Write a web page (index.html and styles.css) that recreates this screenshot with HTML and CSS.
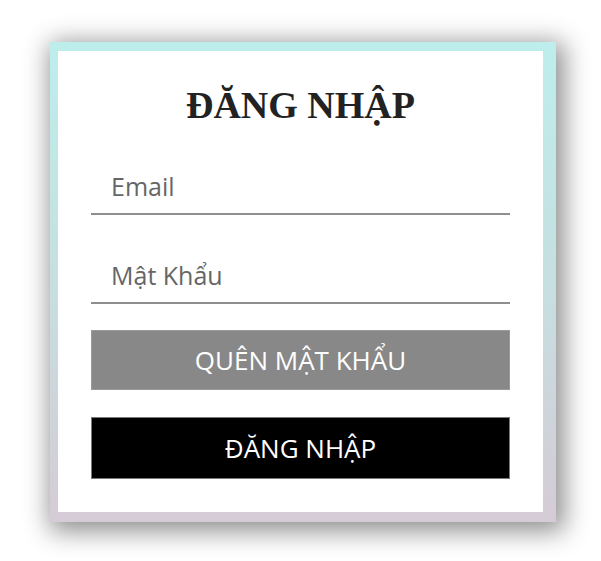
FILE: index.html
```html
<!DOCTYPE html>
<html lang="vi">
<head>
<meta charset="utf-8">
<title>Đăng nhập</title>
<link rel="stylesheet" href="styles.css">
</head>
<body>
  <div class="frame">
    <form class="card">
      <h1 class="title">ĐĂNG NHẬP</h1>
      <input class="field" type="email" placeholder="Email">
      <input class="field field-gap" type="password" placeholder="Mật Khẩu">
      <button type="button" class="btn btn-forgot">QUÊN MẬT KHẨU</button>
      <button type="submit" class="btn btn-login">ĐĂNG NHẬP</button>
    </form>
  </div>
</body>
</html>
```
FILE: styles.css
```css
html, body {
  margin: 0;
  padding: 0;
  background: #ffffff;
}

body {
  padding: 42px 0 39px 50px;
}

.frame {
  width: 506px;
  height: 480px;
  box-sizing: border-box;
  padding: 9px 13px 10px 8px;
  background: linear-gradient(to bottom, #bdeeec 0%, #c6dfe0 50%, #d5cbd6 100%);
  box-shadow: 4px 5px 24px 4px rgba(0, 0, 0, 0.45);
}

.card {
  height: 100%;
  box-sizing: border-box;
  background: #ffffff;
  padding: 32px 33px 0 33px;
  display: flex;
  flex-direction: column;
}

.title {
  margin: 0;
  text-align: center;
  font-family: "Liberation Serif", "Times New Roman", serif;
  font-weight: bold;
  font-size: 38px;
  line-height: 44px;
  color: #222222;
}

.field {
  display: block;
  width: 100%;
  height: 46px;
  box-sizing: border-box;
  margin: 42px 0 0 0;
  padding: 0 0 11px 20px;
  border: none;
  border-bottom: 2px solid #8e8e8e;
  outline: none;
  background: transparent;
  font-family: "Open Sans", "Noto Sans", sans-serif;
  font-size: 25px;
  color: #555555;
}

.field-gap {
  margin-top: 43px;
}

.field::placeholder {
  color: #666666;
  opacity: 1;
}

.btn {
  display: block;
  width: 100%;
  box-sizing: border-box;
  border: 1px solid #9a9a9a;
  font-family: "Open Sans", "Noto Sans", sans-serif;
  font-size: 26px;
  color: #ffffff;
  padding: 0;
  cursor: pointer;
}

.btn-forgot {
  margin-top: 26px;
  height: 60px;
  background: #888888;
}

.btn-login {
  margin-top: 27px;
  height: 62px;
  background: #000000;
  border-color: #7a7a7a;
}
```
